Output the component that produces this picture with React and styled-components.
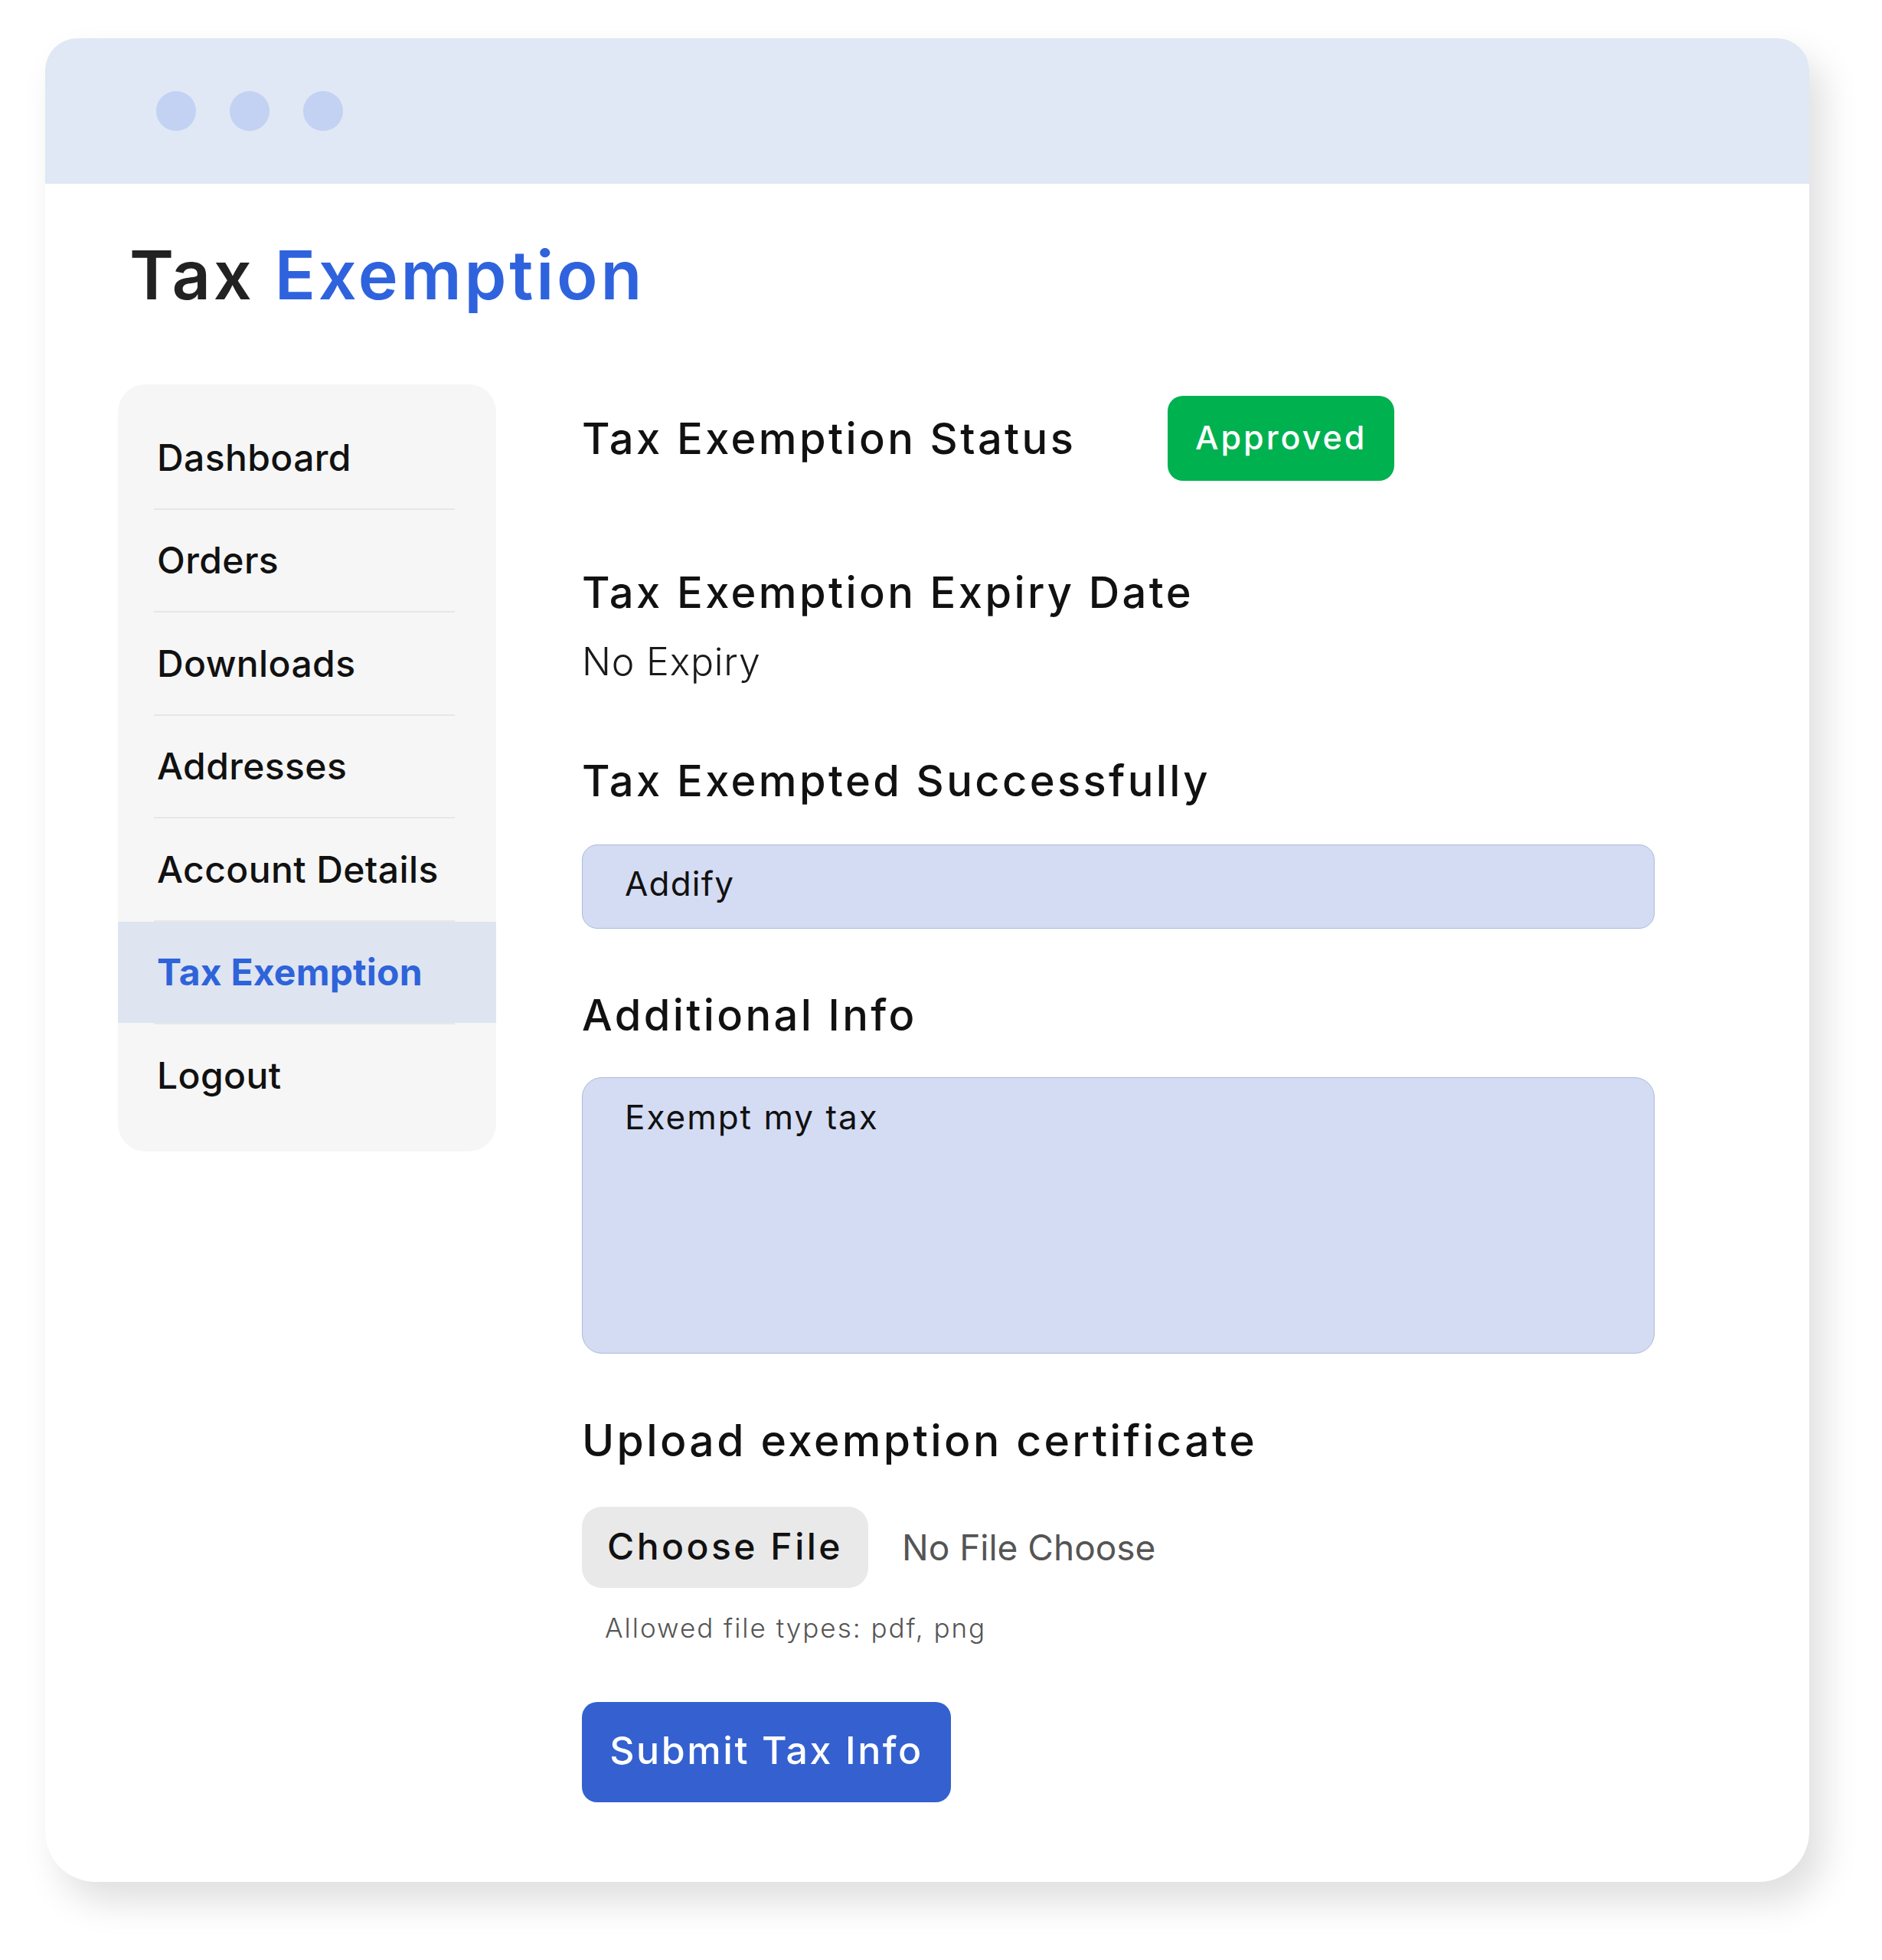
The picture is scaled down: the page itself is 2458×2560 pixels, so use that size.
import React from 'react';
import styled, { createGlobalStyle } from 'styled-components';

const GlobalStyle = createGlobalStyle`
  html, body {
    margin: 0;
    padding: 0;
    background: #ffffff;
  }
  body {
    font-family: Inter, "Noto Sans", sans-serif;
    color: #111111;
  }
  * {
    box-sizing: border-box;
  }
`;

const Page = styled.div`
  width: 2458px;
  padding: 50px 95px 104px 59px;
`;

const Window = styled.div`
  width: 2304px;
  background: #ffffff;
  border-radius: 42px 42px 66px 66px;
  overflow: hidden;
  box-shadow: 18px 26px 48px rgba(0, 0, 0, 0.13);
  padding-bottom: 104px;
`;

const TitleBar = styled.div`
  height: 190px;
  background: #dfe8f4;
  display: flex;
  align-items: center;
  gap: 44px;
  padding-left: 145px;
`;

const Dot = styled.span`
  width: 52px;
  height: 52px;
  border-radius: 50%;
  background: #c3d1f2;
`;

const PageTitle = styled.h1`
  margin: 75px 0 0 110px;
  font-size: 88px;
  line-height: 1;
  font-weight: 600;
  letter-spacing: 3.8px;
  color: #222222;

  span {
    color: #2f63dd;
  }
`;

const Layout = styled.div`
  display: flex;
  align-items: flex-start;
  gap: 112px;
  margin-top: 99px;
  padding-left: 95px;
`;

const Sidebar = styled.nav`
  width: 494px;
  background: #f6f6f6;
  border-radius: 36px;
  padding: 29px 0 33px;
  display: flex;
  flex-direction: column;
`;

const NavItem = styled.div`
  height: 132.5px;
  display: flex;
  align-items: center;
  padding-left: 51px;
  font-size: 48px;
  font-weight: ${p => (p.$active ? 700 : 500)};
  color: ${p => (p.$active ? '#2f63d9' : '#111111')};
  background: ${p => (p.$active ? '#dee5f1' : 'transparent')};
  letter-spacing: ${p => (p.$active ? '0.2px' : '0.4px')};
`;

const NavDivider = styled.div`
  height: 2px;
  margin: 0 54px 0 47px;
  background: #e7e7e7;
`;

const Main = styled.main`
  width: 1401px;
  padding-top: 15px;
  display: flex;
  flex-direction: column;
`;

const StatusRow = styled.div`
  display: flex;
  align-items: center;
  gap: 120px;
`;

const Heading = styled.h2`
  margin: ${p => p.$top || 0}px 0 0;
  font-size: ${p => p.$size || 56}px;
  line-height: 1;
  font-weight: 500;
  letter-spacing: 3.4px;
  color: #111111;
`;

const Badge = styled.span`
  width: 296px;
  height: 111px;
  border-radius: 20px;
  background: #00b150;
  color: #ffffff;
  font-size: 43px;
  font-weight: 500;
  letter-spacing: 3px;
  display: flex;
  align-items: center;
  justify-content: center;
  padding-bottom: 4px;
`;

const ValueText = styled.p`
  margin: 37px 0 0;
  font-size: 50px;
  line-height: 1;
  font-weight: 300;
  color: #1a1a1a;
  letter-spacing: 0.8px;
`;

const TextInput = styled.input`
  margin-top: ${p => p.$top}px;
  width: 100%;
  height: 110px;
  padding: 0 0 8px 55px;
  border: 1.5px solid #abbadb;
  border-radius: 20px;
  background: #d4dcf3;
  font-family: Inter, "Noto Sans", sans-serif;
  font-size: 44px;
  font-weight: 400;
  color: #111111;
  letter-spacing: 1.2px;
  outline: none;
`;

const TextArea = styled.textarea`
  margin-top: ${p => p.$top}px;
  width: 100%;
  height: 361px;
  padding: 25px 55px;
  border: 1.5px solid #abbadb;
  border-radius: 26px;
  background: #d4dcf3;
  font-family: Inter, "Noto Sans", sans-serif;
  font-size: 44px;
  line-height: 1.2;
  color: #111111;
  letter-spacing: 2px;
  resize: none;
  outline: none;
  display: block;
`;

const FileRow = styled.div`
  margin-top: 58px;
  display: flex;
  align-items: center;
  gap: 44px;
`;

const FileButton = styled.button`
  height: 106px;
  padding: 0 0 4px;
  width: 374px;
  border: none;
  border-radius: 26px;
  background: #e9e9e9;
  font-family: Inter, "Noto Sans", sans-serif;
  font-size: 48px;
  font-weight: 500;
  letter-spacing: 3.5px;
  color: #111111;
`;

const FileName = styled.span`
  font-size: 46px;
  font-weight: 400;
  letter-spacing: 0;
  color: #555555;
`;

const Hint = styled.p`
  margin: 35px 0 0 30px;
  font-size: 35px;
  line-height: 1;
  font-weight: 300;
  letter-spacing: 2px;
  color: #555555;
`;

const SubmitButton = styled.button`
  margin-top: 79px;
  align-self: flex-start;
  width: 482px;
  height: 131px;
  padding: 0 0 6px;
  border: none;
  border-radius: 20px;
  background: #3461cf;
  color: #ffffff;
  font-family: Inter, "Noto Sans", sans-serif;
  font-size: 50px;
  font-weight: 500;
  letter-spacing: 2.6px;
`;

const navItems = [
  'Dashboard',
  'Orders',
  'Downloads',
  'Addresses',
  'Account Details',
  'Tax Exemption',
  'Logout',
];

const App = () => {
  const active = 'Tax Exemption';

  return (
    <Page>
      <GlobalStyle />
      <Window>
        <TitleBar>
          <Dot />
          <Dot />
          <Dot />
        </TitleBar>

        <PageTitle>
          Tax <span>Exemption</span>
        </PageTitle>

        <Layout>
          <Sidebar>
            {navItems.map((item, i) => (
              <React.Fragment key={item}>
                {i > 0 && <NavDivider />}
                <NavItem $active={item === active}>{item}</NavItem>
              </React.Fragment>
            ))}
          </Sidebar>

          <Main>
            <StatusRow>
              <Heading>Tax Exemption Status</Heading>
              <Badge>Approved</Badge>
            </StatusRow>

            <Heading $top={118}>Tax Exemption Expiry Date</Heading>
            <ValueText>No Expiry</ValueText>

            <Heading $top={103}>Tax Exempted Successfully</Heading>
            <TextInput $top={55} defaultValue="Addify" readOnly />

            <Heading $top={85}>Additional Info</Heading>
            <TextArea $top={53} defaultValue="Exempt my tax" readOnly />

            <Heading $top={85} $size={57}>Upload exemption certificate</Heading>
            <FileRow>
              <FileButton type="button">Choose File</FileButton>
              <FileName>No File Choose</FileName>
            </FileRow>
            <Hint>Allowed file types: pdf, png</Hint>

            <SubmitButton type="button">Submit Tax Info</SubmitButton>
          </Main>
        </Layout>
      </Window>
    </Page>
  );
};

export default App;
